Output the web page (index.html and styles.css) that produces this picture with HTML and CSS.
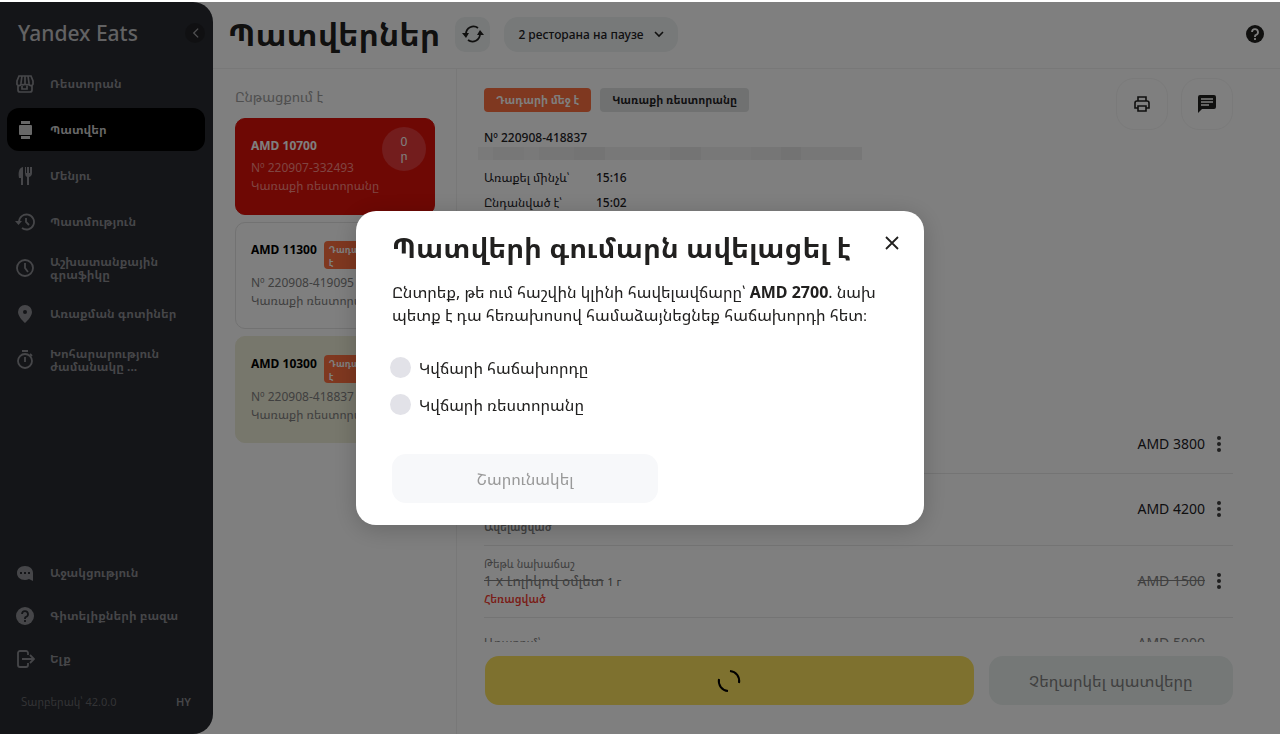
FILE: index.html
```html
<!DOCTYPE html>
<html lang="hy">
<head>
    <meta charset="UTF-8">
    <title>Yandex Eats</title>
    <link rel="stylesheet" href="styles.css">
</head>
<body>
    <div class="app">
        <aside class="sidebar">
            <div class="brand">
                <span class="brand-name">Yandex Eats</span>
                <button class="collapse" aria-label="Collapse">
                    <svg width="7" height="12" viewBox="0 0 8 12" fill="none" stroke="currentColor" stroke-width="1.5"><path d="M7 1L2 6l5 5"/></svg>
                </button>
            </div>
            <nav class="menu">
                <a href="#" class="menu-item">
                    <svg viewBox="0 0 20 20" fill="none" stroke="currentColor" stroke-width="1.7"><path d="M4 2h12l2 5v2a2 2 0 0 1-4 1 3 3 0 0 1-4 0 3 3 0 0 1-4 0 2 2 0 0 1-4-1V7zM7 2L6 9M13 2l1 7M10 2v8M3 11v5q0 2 2 2h10q2 0 2-2v-5M7 12v3h5v-3"/></svg>
                    <span>Ռեստորան</span>
                </a>
                <a href="#" class="menu-item active">
                    <svg viewBox="0 0 20 20" fill="currentColor"><path d="M6 1h9v3H6zM6 16h9v3H6z"/><rect x="4" y="5" width="13" height="10" rx="1"/></svg>
                    <span>Պատվեր</span>
                </a>
                <a href="#" class="menu-item">
                    <svg viewBox="0 0 20 20" fill="currentColor"><path d="M8 1C4 2 3 6 4 12h2v7h2zM10 1h1v6h1V1h2v6h1V1h2v6q0 3-3 4v8h-2v-8q-2-1-2-4z"/></svg>
                    <span>Մենյու</span>
                </a>
                <a href="#" class="menu-item">
                    <svg viewBox="0 0 20 20" fill="none" stroke="currentColor" stroke-width="1.8"><path d="M4 10a7.500 7.500 0 1 1 3 6M11 6v4l3 3"/><path d="M0 9h7l-3.500 4z" fill="currentColor" stroke="none"/></svg>
                    <span>Պատմություն</span>
                </a>
                <a href="#" class="menu-item">
                    <svg viewBox="0 0 20 20" fill="none" stroke="currentColor" stroke-width="1.8"><circle cx="10" cy="10" r="8"/><path d="M10 5v5l3 4"/></svg>
                    <span>Աշխատանքային գրաֆիկը</span>
                </a>
                <a href="#" class="menu-item">
                    <svg viewBox="0 0 20 20" fill="currentColor"><path fill-rule="evenodd" d="M10 1a7 7 0 0 0-7 7c0 5 7 11 7 11s7-6 7-11a7 7 0 0 0-7-7zm0 5a2 2 0 1 1 0 4 2 2 0 0 1 0-4z"/></svg>
                    <span>Առաքման գոտիներ</span>
                </a>
                <a href="#" class="menu-item">
                    <svg viewBox="0 0 20 20" fill="none" stroke="currentColor" stroke-width="1.8"><circle cx="10" cy="11" r="7"/><path d="M7 1h6M10 7v5M15 4l2 2"/></svg>
                    <span>Խոհարարություն ժամանակը ...</span>
                </a>
            </nav>
            <nav class="menu menu-bottom">
                <a href="#" class="menu-item">
                    <svg viewBox="0 0 20 20" fill="currentColor"><path fill-rule="evenodd" d="M10 3c-5 0-8 3-8 7s3 7 8 7q2 0 4-1l4 2v-8c0-4-3-7-8-7zM5 9v2h2V9zm4 0v2h2V9zm4 0v2h2V9z"/></svg>
                    <span>Աջակցություն</span>
                </a>
                <a href="#" class="menu-item">
                    <svg viewBox="0 0 20 20" fill="none"><circle cx="10" cy="10" r="9" fill="currentColor"/><path d="M7 8a3 3 0 1 1 4 3q-1 0-1 2M10 14v2" stroke="#282a30" stroke-width="1.8"/></svg>
                    <span>Գիտելիքների բազա</span>
                </a>
                <a href="#" class="menu-item">
                    <svg viewBox="0 0 20 20" fill="none" stroke="currentColor" stroke-width="1.8"><path d="M13 6V4a2 2 0 0 0-2-2H5a2 2 0 0 0-2 2v12a2 2 0 0 0 2 2h6a2 2 0 0 0 2-2v-2M7 10h12M15 6l4 4-4 4"/></svg>
                    <span>Ելք</span>
                </a>
            </nav>
            <div class="sidebar-footer">
                <span>Տարբերակ՝ 42.0.0</span>
                <span class="lang">HY</span>
            </div>
        </aside>

        <main class="main">
            <header class="topbar">
                <h1>Պատվերներ</h1>
                <button class="refresh" aria-label="Refresh">
                    <svg width="22" height="20" viewBox="0 0 22 20" fill="none" stroke="currentColor" stroke-width="1.8"><path d="M4 10a7.500 7.500 0 0 1 12-6M18 10a7.500 7.500 0 0 1-12 6"/><path d="M0 9h7l-3 5zM15 11h7l-4-5z" fill="currentColor" stroke="none"/></svg>
                </button>
                <button class="paused">
                    2 ресторана на паузе
                    <svg width="10" height="7" viewBox="0 0 10 7" fill="none" stroke="currentColor" stroke-width="1.6"><path d="M1 1l4 4 4-4"/></svg>
                </button>
                <button class="help" aria-label="Help">
                    <svg width="20" height="20" viewBox="0 0 20 20" fill="none"><circle cx="10" cy="10" r="9" fill="currentColor"/><path d="M7 8a3 3 0 1 1 4 3q-1 0-1 2M10 14v2" stroke="#fff" stroke-width="1.8"/></svg>
                </button>
            </header>

            <div class="content">
                <section class="orders">
                    <h2>Ընթացքում է</h2>
                    <article class="order order-late">
                        <div class="order-top"><b>AMD 10700</b></div>
                        <p class="order-id">Nº 220907-332493</p>
                        <p class="order-type">Կառաքի ռեստորանը</p>
                        <span class="timer">0<br>ր</span>
                    </article>
                    <article class="order">
                        <div class="order-top"><b>AMD 11300</b><span class="badge-small">Դադարի մեջ է</span></div>
                        <p class="order-id">Nº 220908-419095</p>
                        <p class="order-type">Կառաքի ռեստորանը</p>
                    </article>
                    <article class="order order-selected">
                        <div class="order-top"><b>AMD 10300</b><span class="badge-small">Դադարի մեջ է</span></div>
                        <p class="order-id">Nº 220908-418837</p>
                        <p class="order-type">Կառաքի ռեստորանը</p>
                    </article>
                </section>

                <section class="detail">
                    <div class="detail-head">
                        <span class="badge badge-pause">Դադարի մեջ է</span>
                        <span class="badge">Կառաքի ռեստորանը</span>
                        <div class="actions">
                            <button class="round" aria-label="Print">
                                <svg width="18" height="18" viewBox="0 0 18 18" fill="none" stroke="currentColor" stroke-width="1.6"><path d="M5 6V2h8v4M5 13H2V8q0-2 2-2h10q2 0 2 2v5h-3M5 11h8v5H5z"/></svg>
                            </button>
                            <button class="round" aria-label="Chat">
                                <svg width="20" height="20" viewBox="0 0 20 20"><path d="M3 1h14q2 0 2 2v10q0 2-2 2H5l-4 4V3q0-2 2-2z" fill="currentColor"/><path d="M4 5h12M4 8h12M4 11h8" stroke="#fff" stroke-width="1.3"/></svg>
                            </button>
                        </div>
                    </div>
                    <p class="detail-id">Nº 220908-418837</p>
                    <div class="address"></div>
                    <dl class="times">
                        <dt>Առաքել մինչև՝</dt><dd>15:16</dd>
                        <dt>Ընդանված է՝</dt><dd>15:02</dd>
                    </dl>
                    <div class="items">
                        <div class="item item-first">
                            <div class="item-info"></div>
                            <span class="price">AMD 3800</span>
                            <button class="more" aria-label="More"><i></i><i></i><i></i></button>
                        </div>
                        <div class="item">
                            <div class="item-info item-info-end"><small class="added">Ավելացված</small></div>
                            <span class="price">AMD 4200</span>
                            <button class="more" aria-label="More"><i></i><i></i><i></i></button>
                        </div>
                        <div class="item">
                            <div class="item-info">
                                <small>Թեթև նախաճաշ</small>
                                <p><s>1 x Լոլիկով օմլետ</s> <span class="weight">1 г</span></p>
                                <small class="removed">Հեռացված</small>
                            </div>
                            <s class="price">AMD 1500</s>
                            <button class="more" aria-label="More"><i></i><i></i><i></i></button>
                        </div>
                        <div class="item item-total">
                            <span class="item-info">Առաքում՝</span>
                            <span class="price">AMD 5000</span>
                        </div>
                    </div>
                    <footer class="detail-footer">
                        <button class="accept" aria-label="Loading">
                            <svg width="24" height="24" viewBox="0 0 24 24" fill="none" stroke="currentColor" stroke-width="2"><path d="M13 2a10 10 0 0 1 9 12M2 10a10 10 0 0 0 9 12"/></svg>
                        </button>
                        <button class="cancel">Չեղարկել պատվերը</button>
                    </footer>
                </section>
            </div>
        </main>
    </div>

    <div class="overlay">
        <form class="modal">
            <button type="button" class="close" aria-label="Close">
                <svg width="14" height="14" viewBox="0 0 14 14" fill="none" stroke="currentColor" stroke-width="1.8"><path d="M1 1l12 12M13 1L1 13"/></svg>
            </button>
            <h2>Պատվերի գումարն ավելացել է</h2>
            <p>Ընտրեք, թե ում հաշվին կլինի հավելավճարը՝ <b>AMD 2700</b>. նախ պետք է դա հեռախոսով համաձայնեցնեք հաճախորդի հետ։</p>
            <label class="choice"><input type="radio" name="payer"> Կվճարի հաճախորդը</label>
            <label class="choice"><input type="radio" name="payer"> Կվճարի ռեստորանը</label>
            <button type="button" class="continue">Շարունակել</button>
        </form>
    </div>
</body>
</html>
```
FILE: styles.css
```css
* { box-sizing: border-box; }
body { margin: 0; padding-top: 2px; background: #fff; color: #21201f; font-family: "Noto Sans", "Noto Sans Armenian", "DejaVu Sans", sans-serif; font-size: 13px; overflow: hidden; }
h1, h2, p, dl, dd { margin: 0; }
button { border: none; background: none; padding: 0; font-family: inherit; color: inherit; cursor: pointer; display: flex; align-items: center; justify-content: center; }
.app { display: flex; height: calc(100vh - 2px); }

/* sidebar */
.sidebar { width: 213px; flex-shrink: 0; display: flex; flex-direction: column; background: #282a30; border-radius: 0 20px 20px 0; padding: 0 8px 22px 7px; color: #8c8d92; }
.brand { display: flex; align-items: center; justify-content: space-between; height: 60px; padding: 2px 0 0 11px; }
.brand-name { font-size: 21px; font-weight: 500; color: #c4c4c6; }
.collapse { width: 20px; height: 20px; border-radius: 50%; background: #202125; color: #a0a0a4; }
.menu { display: flex; flex-direction: column; gap: 3px; }
.menu-bottom { gap: 0; margin-top: auto; }
.menu-item { display: flex; align-items: center; gap: 15px; height: 43px; padding: 0 16px 0 8px; border-radius: 12px; color: inherit; text-decoration: none; font-size: 12px; line-height: 13px; font-weight: 700; }
.menu-item svg { width: 20px; height: 20px; flex-shrink: 0; }
.menu-item.active { background: #000; color: #d0d0d0; }
.sidebar-footer { display: flex; justify-content: space-between; padding: 12px 14px 0; font-size: 11px; line-height: 20px; color: #66676b; }
.lang { color: #8c8d92; font-weight: 600; }

/* header */
.main { flex: 1; min-width: 0; display: flex; flex-direction: column; }
.topbar { display: flex; align-items: center; height: 67px; padding: 0 15px 2px; border-bottom: 1px solid #f0f0f0; }
.topbar h1 { font-size: 32px; line-height: 40px; }
.refresh { width: 35px; height: 35px; margin-left: 15px; border-radius: 10px; background: #eef2f2; }
.paused { gap: 10px; height: 35px; margin-left: 14px; padding: 0 14px; border-radius: 14px; background: #eef2f2; font-size: 12px; font-weight: 500; }
.help { margin-left: auto; }

.content { flex: 1; min-height: 0; display: flex; }

/* order list */
.orders { width: 244px; flex-shrink: 0; padding: 18px 21px 18px 22px; border-right: 1px solid #f0f0f0; }
.orders h2 { font-size: 14px; line-height: 20px; font-weight: 400; color: #9e9e9e; margin-bottom: 11px; }
.order { position: relative; height: 107px; margin-bottom: 7px; padding: 18px 15px; border: 1px solid #e4e4e4; border-radius: 10px; color: #808080; font-size: 12px; line-height: 18px; white-space: nowrap; }
.order-top { display: flex; gap: 7px; height: 33px; color: #000; font-size: 12px; }
.order-late { height: 97px; background: #dd1008; border-color: #dd1008; color: #ff8a84; }
.order-late .order-top { height: 22px; color: #fff; }
.order-selected { background: #efeed8; border-color: #efeed8; }
.order-top b { line-height: 18px; }
.badge-small { width: 76px; height: 28px; padding: 2px 5px; border-radius: 4px; background: #ff7040; color: #fff; font-size: 9px; line-height: 13px; font-weight: 700; white-space: normal; }
.timer { position: absolute; top: 8px; right: 8px; width: 44px; height: 44px; padding-top: 8px; border-radius: 50%; background: #e63a3a; color: #fff; text-align: center; line-height: 14px; }

/* order detail */
.detail { flex: 1; min-width: 0; display: flex; flex-direction: column; padding: 9px 47px 29px 27px; }
.detail-head { display: flex; align-items: flex-start; gap: 9px; height: 50px; }
.badge { height: 24px; margin-top: 10px; padding: 0 12px; border-radius: 4px; background: #e0e3e3; font-size: 11px; line-height: 24px; font-weight: 700; }
.badge-pause { background: #ff7040; color: #fff; }
.actions { display: flex; gap: 13px; margin-left: auto; }
.round { width: 52px; height: 52px; border: 1px solid #f4f4f4; border-radius: 18px; }
.detail-id { font-size: 12px; line-height: 19px; font-weight: 500; }
.address { width: 384px; height: 13px; margin-left: -6px; background: linear-gradient(90deg, #f4f4f4 0 4%, #eee 4% 12%, #f2f2f2 12% 16%, #ececec 16% 25%, #e9e9e9 25% 33%, #f0f0f0 33% 50%, #e8e8e8 50% 58%, #f0f0f0 58% 71%, #ececec 71% 79%, #e6e6e6 79% 84%, #eee 84%); }
.times { display: grid; grid-template-columns: 112px auto; margin-top: 5px; font-size: 12px; line-height: 25px; }
.times dd { font-weight: 500; }
.items { flex: 1; min-height: 0; overflow: hidden; display: flex; flex-direction: column; margin-top: 201px; }
.item { display: flex; align-items: center; flex-shrink: 0; height: 72px; padding: 0 10px 2px 0; border-bottom: 1px solid #e8e8e8; }
.item-first { height: 58px; }
.item-info { flex: 1; align-self: center; color: #808080; font-size: 12px; line-height: 17px; }
.item-info p { font-size: 14px; }
.item-info-end { align-self: flex-end; padding-bottom: 8px; }
.item-info small { display: block; font-size: 11px; }
.item-info .added { font-weight: 600; }
.item-info .removed { color: #f43b30; font-weight: 600; }
.item-info .weight { font-size: 11px; color: #606060; }
.item .price { font-size: 14px; }
.item s.price, .item-total .price { color: #808080; }
.item-total { height: 50px; padding-right: 28px; border-bottom: none; }
.more { flex-direction: column; gap: 2px; width: 9px; margin-left: 9px; }
.more i { width: 4px; height: 4px; border-radius: 50%; background: #404040; }
.detail-footer { display: flex; gap: 15px; margin-top: 14px; padding-left: 1px; }
.accept { flex: 2; height: 49px; border-radius: 14px; background: #fce25e; color: #000; }
.cancel { flex: 1; height: 49px; border-radius: 14px; background: #eaf0ee; color: #808080; font-size: 16px; }

/* modal */
.overlay { position: fixed; inset: 2px 0 0; display: flex; align-items: center; justify-content: center; background: rgba(0, 0, 0, 0.5); }
.modal { position: relative; width: 568px; max-width: 100%; padding: 18px 36px 22px; border-radius: 20px; background: #fff; box-shadow: 0 4px 24px rgba(0, 0, 0, 0.2); }
.modal h2 { font-size: 28px; line-height: 36px; white-space: nowrap; }
.modal p { margin: 16px 0 22px; font-size: 16px; line-height: 23px; }
.close { position: absolute; top: 25px; right: 25px; }
.choice { display: flex; align-items: center; gap: 8px; height: 37px; font-size: 16px; }
.choice input { appearance: none; width: 21px; height: 21px; margin: 0 0 0 -2px; border-radius: 50%; background: #e2e2e8; }
.continue { width: 266px; height: 49px; margin-top: 31px; border-radius: 14px; background: #f7f8fa; color: #999; font-size: 16px; }
```
